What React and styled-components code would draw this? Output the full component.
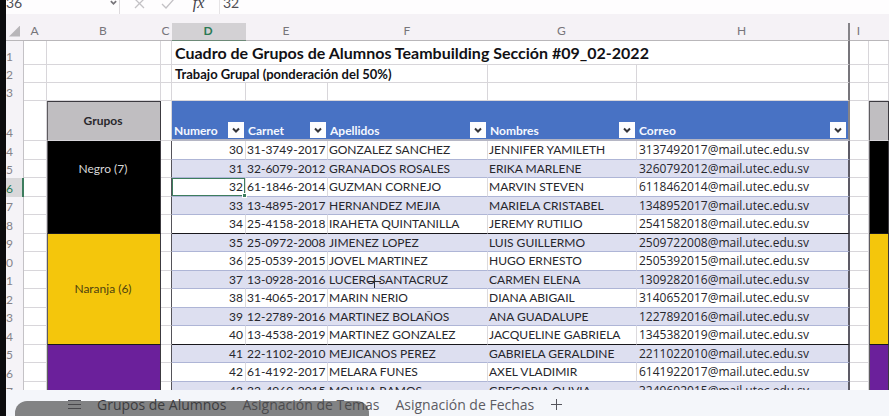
import React from "react";
import styled, { createGlobalStyle, css } from "styled-components";

const GlobalStyle = createGlobalStyle`
  *, *::before, *::after { box-sizing: border-box; }
  body { margin: 0; background: #f4f6fa; overflow: hidden; }
`;

const sheetFont = `Lato, "Open Sans", sans-serif`;
const uiFont = `"Open Sans", "Noto Sans", sans-serif`;
const grid = "#d8d6da";
const dark = "#3c3a40";

const Window = styled.main`
  display: flex;
  flex-direction: column;
  height: 100vh;
  overflow: hidden;
  border-left: 6px solid #0c0c0e;
  background: #f5f2f6;
  color: #26262c;
  font-family: ${sheetFont};
`;

const FormulaBar = styled.div`
  display: flex;
  align-items: flex-end;
  flex: none;
  height: 14px;
  margin-bottom: 9px;
  background: #fefdfe;
`;

const NameBox = styled.div`
  display: flex;
  align-items: center;
  width: 114px;
  height: 24px;
  border-right: 1px solid #dddadd;
`;

const BarInput = styled.input`
  flex: 1;
  min-width: 0;
  height: 24px;
  padding: 0;
  border: 0;
  background: transparent;
  color: #505055;
  font: 14px ${sheetFont};
`;

const BarButton = styled.button`
  display: flex;
  align-items: center;
  justify-content: center;
  width: ${(p) => p.$width}px;
  height: 22px;
  padding: 0;
  border: 0;
  background: transparent;
  color: ${(p) => p.$color || "#c3c1c5"};
  font: italic 16px "Liberation Serif", serif;
`;

const FormulaField = styled.div`
  display: flex;
  flex: 1;
  border-left: 1px solid #e6e4e6;
  padding-left: 3px;
`;

const Sheet = styled.div`
  flex: 1;
  min-height: 0;
  overflow: hidden;
  background: #fff;
`;

const Grid = styled.table`
  width: 100%;
  table-layout: fixed;
  border-collapse: separate;
  border-spacing: 0;
  font-size: 12px;
  line-height: 16px;
`;

const Col = styled.col`
  width: ${(p) => (p.$width ? `${p.$width}px` : "auto")};
`;

const Row = styled.tr`
  height: ${(p) => p.$height}px;
`;

const ColumnHeader = styled.th`
  height: 18px;
  padding: 0 2px 1px 0;
  border-bottom: 1px solid #b9b7ba;
  background: #f5f2f6;
  color: #77757a;
  font-weight: 400;
  overflow: hidden;
  ${(p) => p.$active && css`
    border-bottom-color: #6d8a78;
    background: #d3d1d4;
    color: #2b7a55;
    font-weight: 700;
  `}
  ${(p) => p.$divider && css`border-right: 2px solid #858388;`}
`;

const SelectAll = styled.button`
  display: block;
  width: 11px;
  height: 11px;
  margin-left: 3px;
  padding: 0;
  border: 0;
  background: #b8b6b9;
  clip-path: polygon(100% 0, 100% 100%, 0 100%);
`;

const RowHeader = styled.th`
  padding: 0;
  border-right: 1px solid #c4c2c6;
  background: #f5f3f7;
  color: #858389;
  font-weight: 400;
  text-align: left;
  vertical-align: bottom;
  ${(p) => p.$active && css`
    border-right: 2px solid #3d7d5e;
    background: #d9d8da;
    color: #2b7a55;
  `}
`;

const Cell = styled.td`
  padding: 0 2px 0 1px;
  border-right: 1px solid ${grid};
  border-bottom: 1px solid ${grid};
  white-space: nowrap;
  overflow: hidden;
  ${(p) => p.$divider && css`border-right: 2px solid #77757b;`}
  ${(p) => p.$groupEdge && css`border-right-color: #55535a;`}
`;

const Title = styled(Cell)`
  padding-left: 3px;
  color: #111115;
  font-weight: 700;
  font-size: ${(p) => (p.$large ? 16 : 13)}px;
`;

const DataCell = styled(Cell)`
  position: relative;
  border-right-color: ${(p) => (p.$banded ? "#dddff0" : "#dcdade")};
  border-bottom-color: ${(p) => (p.$groupEnd ? "#18171c" : "#aeb5d6")};
  background: ${(p) => (p.$banded ? "#dddff0" : "#fff")};
  text-align: ${(p) => (p.$number ? "right" : "left")};
  ${(p) => p.$divider && css`border-right-color: #5d5b66;`}
  ${(p) => p.$selected && css`box-shadow: inset 0 0 0 1px #3d7d5e; overflow: visible;`}
`;

const MailCell = styled(DataCell)`
  padding-left: 2px;
  font-family: ${uiFont};
`;

const FillHandle = styled.span`
  position: absolute;
  right: -2px;
  bottom: -2px;
  z-index: 1;
  width: 5px;
  height: 5px;
  border: 1px solid #fff;
  background: #3d7d5e;
`;

const Crosshair = styled.svg`
  position: absolute;
  left: 39px;
  top: 3px;
  width: 15px;
  height: 15px;
`;

const TableHeading = styled.th`
  padding: 0 2px 1px;
  border-bottom: 2px solid #b5b6c4;
  ${(p) => p.$divider && css`border-right: 2px solid #858388;`}
  background: #4872c4;
  color: #f5f8ff;
  font-weight: 700;
  text-align: left;
  vertical-align: bottom;
`;

const HeadingContent = styled.div`
  display: flex;
  align-items: flex-end;
  justify-content: space-between;
`;

const HeadingLabel = styled.span`
  line-height: 14px;
`;

const FilterButton = styled.button`
  display: flex;
  align-items: center;
  justify-content: center;
  flex: none;
  width: 16px;
  height: 16px;
  padding: 0;
  border: 0;
  background: #fdfdff;
  color: #333338;
`;

const groupColors = {
  header: ["#c0bec1", "#29282c"],
  black: ["#000", "#d8d8d8"],
  yellow: ["#f4c60c", "#4f430f"],
  purple: ["#6b209b", "#fff"],
};

const GroupCell = styled.td`
  padding: ${(p) => (p.$tone === "black" ? "20px 2px 0 0" : "0 2px 0 0")};
  border-left: 1px solid #5e5c60;
  border-right: 1px solid ${dark};
  border-bottom: 1px solid ${(p) => (p.$tone === "header" ? "#d7d5da" : "#18171c")};
  ${(p) => p.$tone === "header" && css`border-top: 1px solid ${dark};`}
  background: ${(p) => groupColors[p.$tone][0]};
  color: ${(p) => groupColors[p.$tone][1]};
  font-weight: ${(p) => (p.$tone === "header" ? 700 : 400)};
  text-align: center;
  vertical-align: ${(p) => (p.$tone === "black" ? "top" : "middle")};
`;

const TabBar = styled.nav`
  position: relative;
  display: flex;
  align-items: center;
  flex: none;
  gap: 16px;
  height: 26px;
  padding: 3px 0 0 62px;
  background: #f4f6fa;
`;

const TabLink = styled.a`
  color: ${(p) => (p.$active ? "#333338" : "#5c5c63")};
  font: 14px/20px ${uiFont};
  text-decoration: none;
  white-space: nowrap;
`;

const TabButton = styled.button`
  display: flex;
  padding: 0;
  border: 0;
  background: transparent;
  color: #55555c;
`;

const Shade = styled.div`
  position: absolute;
  left: 9px;
  bottom: 0;
  width: 354px;
  height: 15px;
  border-radius: 12px 12px 0 0;
  background: rgba(65, 65, 65, 0.64);
  pointer-events: none;
`;

const columns = [
  ["A", 23], ["B", 114], ["C", 11], ["D", 74], ["E", 82],
  ["F", 160], ["G", 149], ["H", 213], ["I", 19], ["", 0],
];

const students = [
  [30, "31-3749-2017", "GONZALEZ SANCHEZ", "JENNIFER YAMILETH", "3137492017"],
  [31, "32-6079-2012", "GRANADOS ROSALES", "ERIKA MARLENE", "3260792012"],
  [32, "61-1846-2014", "GUZMAN CORNEJO", "MARVIN STEVEN", "6118462014"],
  [33, "13-4895-2017", "HERNANDEZ MEJIA", "MARIELA CRISTABEL", "1348952017"],
  [34, "25-4158-2018", "IRAHETA QUINTANILLA", "JEREMY RUTILIO", "2541582018"],
  [35, "25-0972-2008", "JIMENEZ LOPEZ", "LUIS GUILLERMO", "2509722008"],
  [36, "25-0539-2015", "JOVEL MARTINEZ", "HUGO ERNESTO", "2505392015"],
  [37, "13-0928-2016", "LUCERO SANTACRUZ", "CARMEN ELENA", "1309282016"],
  [38, "31-4065-2017", "MARIN NERIO", "DIANA ABIGAIL", "3140652017"],
  [39, "12-2789-2016", "MARTINEZ BOLAÑOS", "ANA GUADALUPE", "1227892016"],
  [40, "13-4538-2019", "MARTINEZ GONZALEZ", "JACQUELINE GABRIELA", "1345382019"],
  [41, "22-1102-2010", "MEJICANOS PEREZ", "GABRIELA GERALDINE", "2211022010"],
  [42, "61-4192-2017", "MELARA FUNES", "AXEL VLADIMIR", "6141922017"],
  [43, "32-4960-2015", "MOLINA RAMOS", "GREGORIA OLIVIA", "3249602015"],
];

const groups = {
  30: { tone: "black", label: "Negro (7)", span: 5 },
  35: { tone: "yellow", label: "Naranja (6)", span: 6 },
  41: { tone: "purple", label: "", span: 3 },
};

function Chevron({ size = 8 }) {
  return (
    <svg width={size} height={size} viewBox="0 0 8 8" fill="none" stroke="currentColor" strokeWidth="2" aria-hidden="true">
      <path d="M1 2.5 4 5.5 7 2.5" />
    </svg>
  );
}

function StudentRow({ student, index }) {
  const [number, carnet, surname, name, mail] = student;
  const group = groups[number];
  const look = {
    $banded: number % 2 === 1,
    $groupEnd: number === 34 || number === 40,
  };
  const selected = number === 32;
  return (
    <Row $height={index % 2 ? 18 : 19}>
      <RowHeader scope="row" $active={selected}>{(number + 4) % 10}</RowHeader>
      <Cell />
      {group && <GroupCell $tone={group.tone} rowSpan={group.span}>{group.label}</GroupCell>}
      <Cell $groupEdge />
      <DataCell {...look} $number $selected={selected}>
        {number}
        {selected && <FillHandle />}
      </DataCell>
      <DataCell {...look}>{carnet}</DataCell>
      <DataCell {...look}>
        {surname}
        {number === 37 && (
          <Crosshair viewBox="0 0 15 15" stroke="#2a2a30" aria-hidden="true">
            <path d="M7.5 1v13M1 7.5h13" />
          </Crosshair>
        )}
      </DataCell>
      <DataCell {...look}>{name}</DataCell>
      <MailCell {...look} $divider>{mail}@mail.utec.edu.sv</MailCell>
      <Cell />
      {group && <GroupCell $tone={group.tone} rowSpan={group.span} />}
    </Row>
  );
}

export default function App() {
  return (
    <Window>
      <GlobalStyle />
      <FormulaBar>
        <NameBox>
          <BarInput aria-label="Cuadro de nombres" defaultValue="36" />
          <BarButton $width={12} $color="#77757a" aria-label="Lista de nombres"><Chevron size={7} /></BarButton>
        </NameBox>
        <BarButton $width={38} aria-label="Cancelar">
          <svg width="11" height="11" viewBox="0 0 11 11" stroke="currentColor" strokeWidth="1.3"><path d="M1 1l9 9M10 1l-9 9" /></svg>
        </BarButton>
        <BarButton $width={20} aria-label="Introducir">
          <svg width="14" height="11" viewBox="0 0 14 11" fill="none" stroke="currentColor" strokeWidth="1.3"><path d="M1 6l4 4 8-9" /></svg>
        </BarButton>
        <BarButton $width={41} $color="#444248" aria-label="Insertar función">fx</BarButton>
        <FormulaField>
          <BarInput aria-label="Barra de fórmulas" defaultValue="32" />
        </FormulaField>
      </FormulaBar>

      <Sheet>
        <Grid>
          <colgroup>
            <Col $width={18} />
            {columns.map(([label, width]) => <Col key={label} $width={width} />)}
          </colgroup>
          <thead>
            <tr>
              <ColumnHeader><SelectAll aria-label="Seleccionar todo" /></ColumnHeader>
              {columns.map(([label]) => (
                <ColumnHeader key={label} scope="col" $active={label === "D"} $divider={label === "H"}>{label}</ColumnHeader>
              ))}
            </tr>
          </thead>
          <tbody>
            <Row $height={24}>
              <RowHeader scope="row">1</RowHeader>
              <Cell /><Cell /><Cell />
              <Title $large $divider colSpan={5}>Cuadro de Grupos de Alumnos Teambuilding Sección #09_02-2022</Title>
              <Cell /><Cell />
            </Row>
            <Row $height={18}>
              <RowHeader scope="row">2</RowHeader>
              <Cell /><Cell /><Cell />
              <Title colSpan={3}>Trabajo Grupal (ponderación del 50%)</Title>
              <Cell /><Cell $divider /><Cell /><Cell />
            </Row>
            <Row $height={18}>
              <RowHeader scope="row">3</RowHeader>
              <Cell /><Cell /><Cell /><Cell /><Cell /><Cell /><Cell /><Cell $divider /><Cell /><Cell />
            </Row>
            <Row $height={40}>
              <RowHeader scope="row">4</RowHeader>
              <Cell />
              <GroupCell $tone="header">Grupos</GroupCell>
              <Cell />
              {["Numero", "Carnet", "Apellidos", "Nombres", "Correo"].map((label) => (
                <TableHeading key={label} scope="col" $divider={label === "Correo"}>
                  <HeadingContent>
                    <HeadingLabel>{label}</HeadingLabel>
                    <FilterButton aria-label={`Filtrar ${label}`}><Chevron /></FilterButton>
                  </HeadingContent>
                </TableHeading>
              ))}
              <Cell />
              <GroupCell $tone="header" />
            </Row>
            {students.map((student, index) => (
              <StudentRow key={student[0]} student={student} index={index} />
            ))}
          </tbody>
        </Grid>
      </Sheet>

      <TabBar aria-label="Hojas">
        <TabButton aria-label="Todas las hojas">
          <svg width="13" height="11" viewBox="0 0 13 11" stroke="currentColor"><path d="M0 1.5h13M0 5.5h13M0 9.5h13" /></svg>
        </TabButton>
        <TabLink href="#grupos" $active aria-current="page">Grupos de Alumnos</TabLink>
        <TabLink href="#temas">Asignación de Temas</TabLink>
        <TabLink href="#fechas">Asignación de Fechas</TabLink>
        <TabButton aria-label="Nueva hoja">
          <svg width="13" height="13" viewBox="0 0 13 13" stroke="currentColor"><path d="M6.5 1v11M1 6.5h11" /></svg>
        </TabButton>
        <Shade />
      </TabBar>
    </Window>
  );
}
